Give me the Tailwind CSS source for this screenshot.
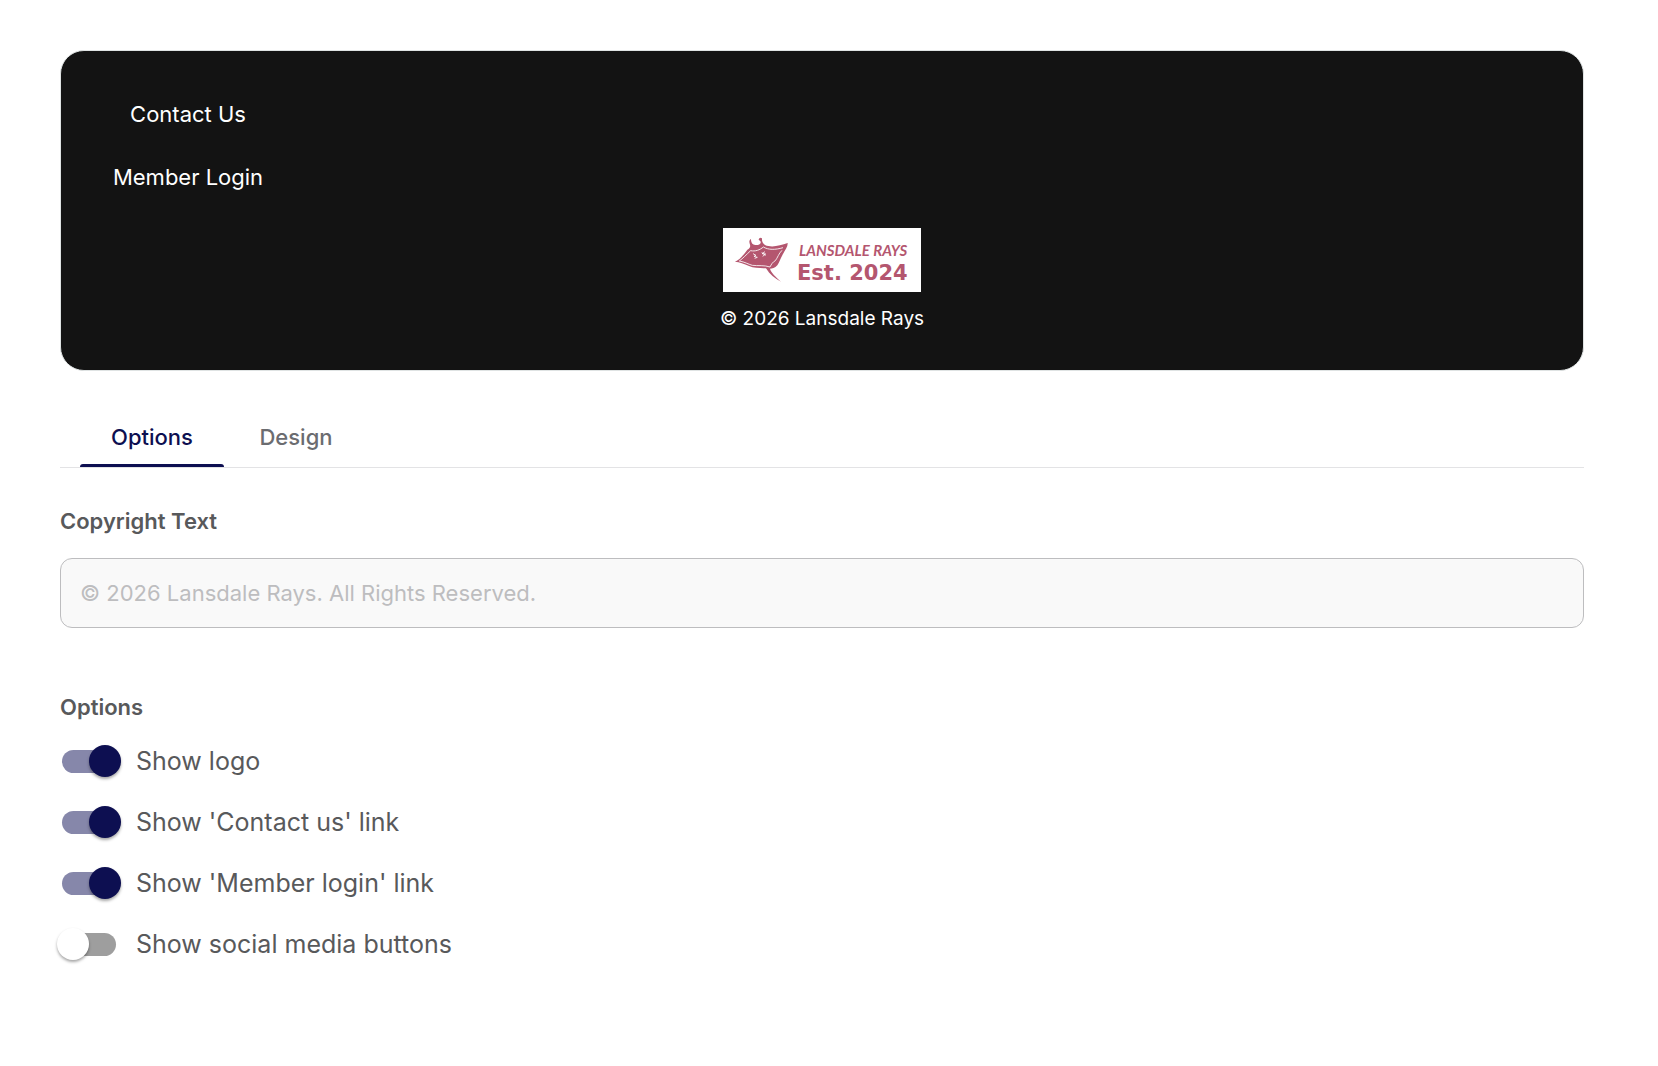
<!DOCTYPE html>
<html lang="en">
<head>
    <meta charset="UTF-8">
    <meta name="viewport" content="width=device-width, initial-scale=1.0">
    <title>Footer settings</title>
    <script src="https://cdn.jsdelivr.net/npm/@tailwindcss/browser@4"></script>
</head>
<body class="min-h-screen bg-white font-['Inter',sans-serif] text-[#58595b]">
<main class="pl-15 pr-[74px] pt-[50px] pb-10">

    <!-- Footer preview -->
    <footer class="rounded-3xl border border-[#dfe3e3] bg-[#131313] px-[35px] pt-8 pb-[37px] text-white">
        <nav class="flex w-46 flex-col items-center text-[22px] leading-[63px]">
            <a href="#contact">Contact Us</a>
            <a href="#login">Member Login</a>
        </nav>
        <div class="mt-[19px] flex flex-col items-center">
            <svg class="h-16 w-[198px] bg-white" viewBox="0 0 198 64" role="img" aria-label="Lansdale Rays, Est. 2024">
                <g transform="translate(2 0) scale(.3333)">
                    <path fill="#b4566f" d="M30 101 C42 97 53 84 67 65 C74 61 77 57 75 50 C72 42 72 37 78 33 C78 45 83 50 91 51 C98 52 106 50 107 44 C108 39 103 37 101 36 C102 29 107 27 111 31 C110 41 114 47 120 51 C140 60 165 53 188 45 C189 56 181 65 174 78 C166 91 164 102 157 112 C150 120 141 122 135 122 C138 133 152 147 168 161 C149 152 134 139 123 121 C106 120 87 121 72 114 C57 108 44 101 30 101Z"/>
                    <path fill="none" stroke="#fff" stroke-width="2.5" d="M43 99 C54 91 64 80 77 68 C90 71 105 66 115 57 C130 66 151 66 174 59 M171 67 C161 77 158 89 151 98 C143 102 139 109 135 117 C118 111 99 114 82 112 C68 108 60 102 43 99"/>
                    <path fill="none" stroke="#fff" stroke-width="2.5" d="M84 77l9 5-6 3 10 3-8 3M110 74l12 8M120 71l-9 6 11 1-9 7"/>
                </g>
                <text x="76" y="28" class="fill-[#b4566f] font-['Lato',sans-serif] text-[15px] font-bold italic">LANSDALE RAYS</text>
                <text x="74" y="52" class="fill-[#b4566f] font-['DejaVu_Sans',sans-serif] text-[21px] font-bold">Est. 2024</text>
            </svg>
            <p class="mt-[13px] text-[19px] leading-7">© 2026 Lansdale Rays</p>
        </div>
    </footer>

    <div role="tablist" class="mt-[37px] flex border-b border-[#e3e3e5] pl-5 text-[22px] font-medium">
        <button type="button" role="tab" aria-selected="true" class="relative h-[59px] w-36 text-[#0d0f51] after:absolute after:inset-x-0 after:bottom-0 after:h-[3px] after:rounded-t-sm after:bg-[#0d0f51]">Options</button>
        <button type="button" role="tab" aria-selected="false" class="h-[59px] w-36 text-[#6b6c70]">Design</button>
    </div>

    <form>
        <label for="copyright" class="mt-[35px] block text-[22px] leading-9 font-semibold">Copyright Text</label>
        <input id="copyright" type="text" placeholder="© 2026 Lansdale Rays. All Rights Reserved." class="mt-[19px] h-[70px] w-full rounded-xl border border-[#bdbdbf] bg-[#f9f9f9] px-[19px] text-[22px] placeholder:text-[#bdbdbf]">

        <fieldset class="mt-[61px]">
            <legend class="text-[22px] leading-9 font-semibold">Options</legend>
            <div class="mt-[6px] flex flex-col pl-[2px] text-[25px] leading-[61px]">
                <label class="flex items-center gap-5">
                    <input type="checkbox" checked class="relative h-[23px] w-[54px] appearance-none rounded-full bg-[#9e9e9e] before:absolute before:-top-[5px] before:-left-[5px] before:size-8 before:rounded-full before:bg-white before:shadow-[0_2px_3px_rgba(0,0,0,0.35)] checked:bg-[#8687aa] checked:before:left-[27px] checked:before:bg-[#0d0f51]">
                    Show logo
                </label>
                <label class="flex items-center gap-5">
                    <input type="checkbox" checked class="relative h-[23px] w-[54px] appearance-none rounded-full bg-[#9e9e9e] before:absolute before:-top-[5px] before:-left-[5px] before:size-8 before:rounded-full before:bg-white before:shadow-[0_2px_3px_rgba(0,0,0,0.35)] checked:bg-[#8687aa] checked:before:left-[27px] checked:before:bg-[#0d0f51]">
                    Show 'Contact us' link
                </label>
                <label class="flex items-center gap-5">
                    <input type="checkbox" checked class="relative h-[23px] w-[54px] appearance-none rounded-full bg-[#9e9e9e] before:absolute before:-top-[5px] before:-left-[5px] before:size-8 before:rounded-full before:bg-white before:shadow-[0_2px_3px_rgba(0,0,0,0.35)] checked:bg-[#8687aa] checked:before:left-[27px] checked:before:bg-[#0d0f51]">
                    Show 'Member login' link
                </label>
                <label class="flex items-center gap-5">
                    <input type="checkbox" class="relative h-[23px] w-[54px] appearance-none rounded-full bg-[#9e9e9e] before:absolute before:-top-[5px] before:-left-[5px] before:size-8 before:rounded-full before:bg-white before:shadow-[0_2px_3px_rgba(0,0,0,0.35)] checked:bg-[#8687aa] checked:before:left-[27px] checked:before:bg-[#0d0f51]">
                    Show social media buttons
                </label>
            </div>
        </fieldset>
    </form>
</main>
</body>
</html>
